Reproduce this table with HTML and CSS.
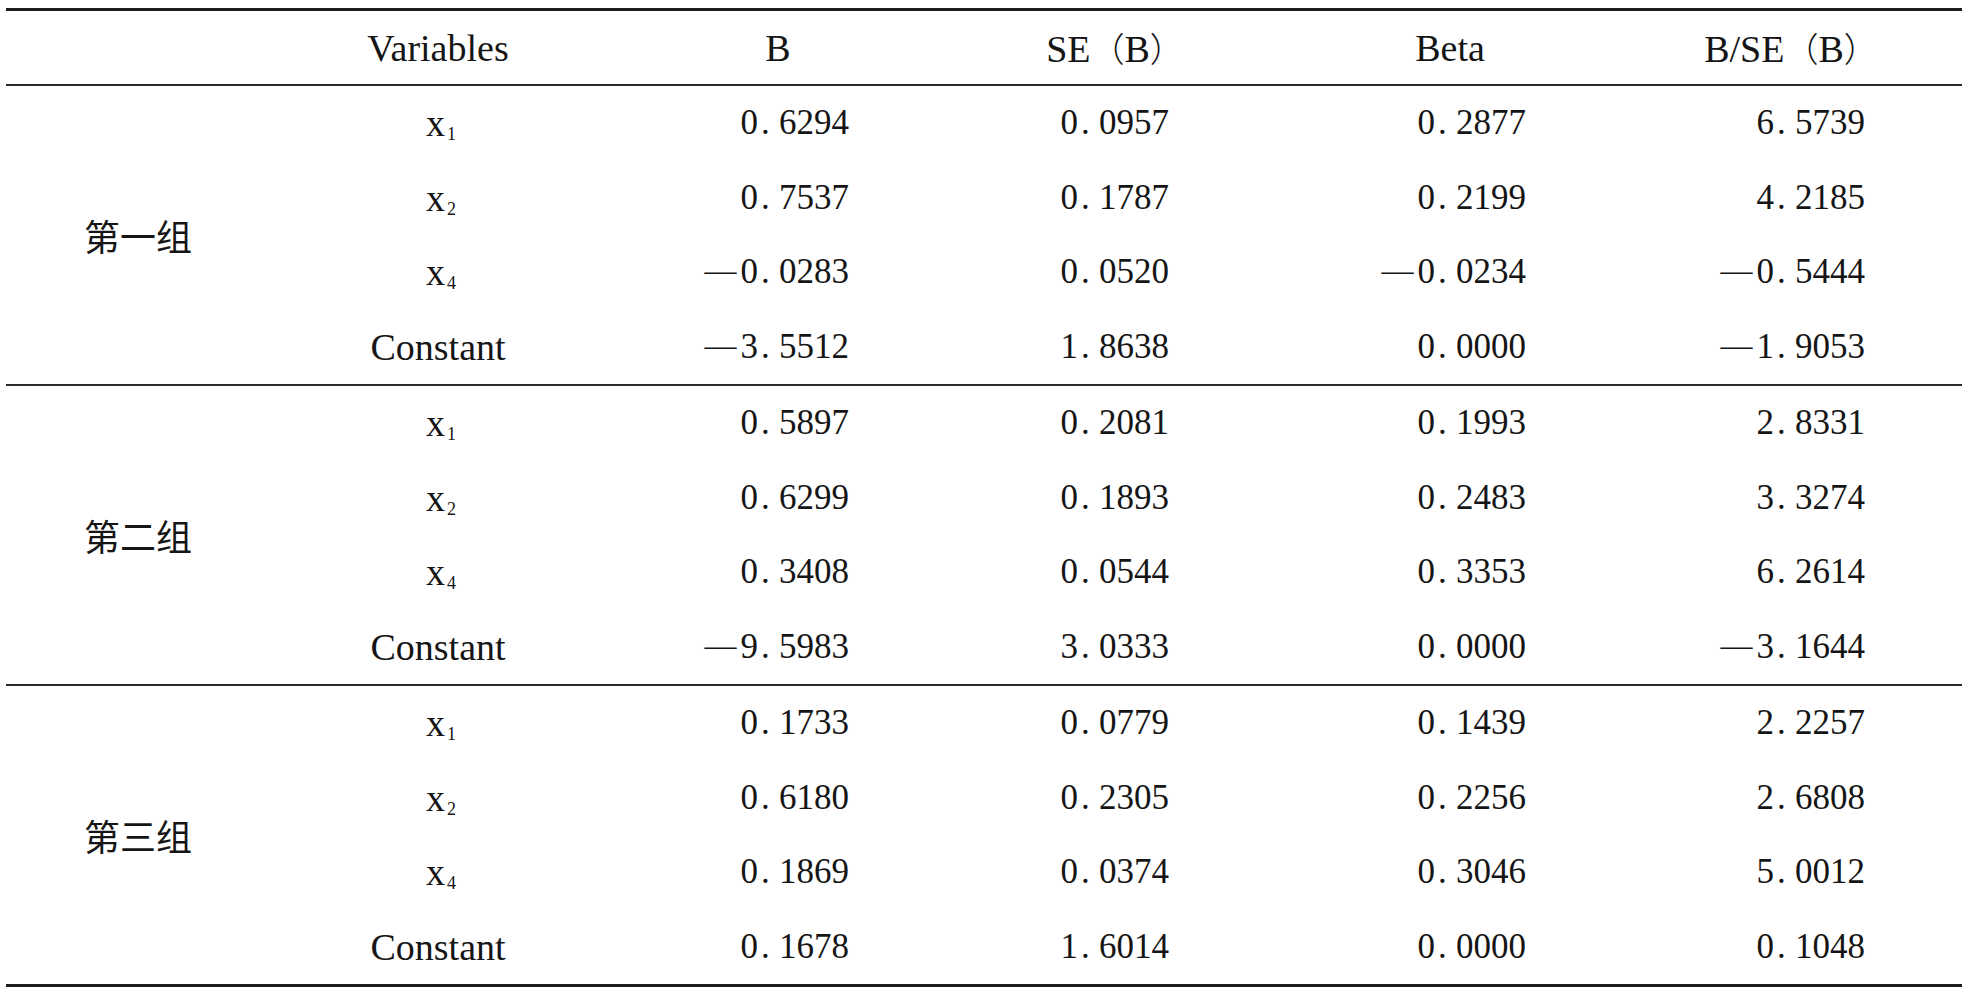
FILE: index.html
```html
<!DOCTYPE html>
<html lang="zh">
<head>
<meta charset="utf-8">
<title>Regression table</title>
<link rel="stylesheet" href="styles.css">
</head>
<body>
<div class="tbl">
  <div class="head">
    <div class="cell"></div>
    <div class="cell ctr">Variables</div>
    <div class="cell ctr">B</div>
    <div class="cell ctr"><span class="h">SE<span class="cjk">（</span>B<span class="cjk">）</span></span></div>
    <div class="cell ctr">Beta</div>
    <div class="cell ctr"><span class="h">B/SE<span class="cjk">（</span>B<span class="cjk">）</span></span></div>
  </div>

  <div class="group">
    <div class="cell label">第一组</div>
    <div class="cell ctr var"><span class="v">x<sub>1</sub></span></div>
    <div class="cell num cb"><span class="n">0<span class="pt">.</span>6294</span></div>
    <div class="cell num cse"><span class="n">0<span class="pt">.</span>0957</span></div>
    <div class="cell num cbeta"><span class="n">0<span class="pt">.</span>2877</span></div>
    <div class="cell num cr"><span class="n">6<span class="pt">.</span>5739</span></div>

    <div class="cell ctr var"><span class="v">x<sub>2</sub></span></div>
    <div class="cell num cb"><span class="n">0<span class="pt">.</span>7537</span></div>
    <div class="cell num cse"><span class="n">0<span class="pt">.</span>1787</span></div>
    <div class="cell num cbeta"><span class="n">0<span class="pt">.</span>2199</span></div>
    <div class="cell num cr"><span class="n">4<span class="pt">.</span>2185</span></div>

    <div class="cell ctr var"><span class="v">x<sub>4</sub></span></div>
    <div class="cell num cb"><span class="n"><span class="neg">—</span>0<span class="pt">.</span>0283</span></div>
    <div class="cell num cse"><span class="n">0<span class="pt">.</span>0520</span></div>
    <div class="cell num cbeta"><span class="n"><span class="neg">—</span>0<span class="pt">.</span>0234</span></div>
    <div class="cell num cr"><span class="n"><span class="neg">—</span>0<span class="pt">.</span>5444</span></div>

    <div class="cell ctr var">Constant</div>
    <div class="cell num cb"><span class="n"><span class="neg">—</span>3<span class="pt">.</span>5512</span></div>
    <div class="cell num cse"><span class="n">1<span class="pt">.</span>8638</span></div>
    <div class="cell num cbeta"><span class="n">0<span class="pt">.</span>0000</span></div>
    <div class="cell num cr"><span class="n"><span class="neg">—</span>1<span class="pt">.</span>9053</span></div>
  </div>

  <div class="group">
    <div class="cell label">第二组</div>
    <div class="cell ctr var"><span class="v">x<sub>1</sub></span></div>
    <div class="cell num cb"><span class="n">0<span class="pt">.</span>5897</span></div>
    <div class="cell num cse"><span class="n">0<span class="pt">.</span>2081</span></div>
    <div class="cell num cbeta"><span class="n">0<span class="pt">.</span>1993</span></div>
    <div class="cell num cr"><span class="n">2<span class="pt">.</span>8331</span></div>

    <div class="cell ctr var"><span class="v">x<sub>2</sub></span></div>
    <div class="cell num cb"><span class="n">0<span class="pt">.</span>6299</span></div>
    <div class="cell num cse"><span class="n">0<span class="pt">.</span>1893</span></div>
    <div class="cell num cbeta"><span class="n">0<span class="pt">.</span>2483</span></div>
    <div class="cell num cr"><span class="n">3<span class="pt">.</span>3274</span></div>

    <div class="cell ctr var"><span class="v">x<sub>4</sub></span></div>
    <div class="cell num cb"><span class="n">0<span class="pt">.</span>3408</span></div>
    <div class="cell num cse"><span class="n">0<span class="pt">.</span>0544</span></div>
    <div class="cell num cbeta"><span class="n">0<span class="pt">.</span>3353</span></div>
    <div class="cell num cr"><span class="n">6<span class="pt">.</span>2614</span></div>

    <div class="cell ctr var">Constant</div>
    <div class="cell num cb"><span class="n"><span class="neg">—</span>9<span class="pt">.</span>5983</span></div>
    <div class="cell num cse"><span class="n">3<span class="pt">.</span>0333</span></div>
    <div class="cell num cbeta"><span class="n">0<span class="pt">.</span>0000</span></div>
    <div class="cell num cr"><span class="n"><span class="neg">—</span>3<span class="pt">.</span>1644</span></div>
  </div>

  <div class="group last">
    <div class="cell label">第三组</div>
    <div class="cell ctr var"><span class="v">x<sub>1</sub></span></div>
    <div class="cell num cb"><span class="n">0<span class="pt">.</span>1733</span></div>
    <div class="cell num cse"><span class="n">0<span class="pt">.</span>0779</span></div>
    <div class="cell num cbeta"><span class="n">0<span class="pt">.</span>1439</span></div>
    <div class="cell num cr"><span class="n">2<span class="pt">.</span>2257</span></div>

    <div class="cell ctr var"><span class="v">x<sub>2</sub></span></div>
    <div class="cell num cb"><span class="n">0<span class="pt">.</span>6180</span></div>
    <div class="cell num cse"><span class="n">0<span class="pt">.</span>2305</span></div>
    <div class="cell num cbeta"><span class="n">0<span class="pt">.</span>2256</span></div>
    <div class="cell num cr"><span class="n">2<span class="pt">.</span>6808</span></div>

    <div class="cell ctr var"><span class="v">x<sub>4</sub></span></div>
    <div class="cell num cb"><span class="n">0<span class="pt">.</span>1869</span></div>
    <div class="cell num cse"><span class="n">0<span class="pt">.</span>0374</span></div>
    <div class="cell num cbeta"><span class="n">0<span class="pt">.</span>3046</span></div>
    <div class="cell num cr"><span class="n">5<span class="pt">.</span>0012</span></div>

    <div class="cell ctr var">Constant</div>
    <div class="cell num cb"><span class="n">0<span class="pt">.</span>1678</span></div>
    <div class="cell num cse"><span class="n">1<span class="pt">.</span>6014</span></div>
    <div class="cell num cbeta"><span class="n">0<span class="pt">.</span>0000</span></div>
    <div class="cell num cr"><span class="n">0<span class="pt">.</span>1048</span></div>
  </div>
</div>
</body>
</html>
```
FILE: styles.css
```css
html, body {
  margin: 0;
  padding: 0;
  background: #ffffff;
}

body {
  font-family: "Liberation Serif", "Noto Sans CJK SC", serif;
  color: #151515;
}

.tbl {
  width: 1956px;
  margin: 8px 0 0 6px;
  border-top: 3px solid #1c1c1c;
  border-bottom: 3px solid #1c1c1c;
}

.head,
.group {
  display: grid;
  grid-template-columns: 264px 336px 344px 330px 340px 342px;
}

.head {
  height: 73px;
  border-bottom: 2px solid #2a2a2a;
  font-size: 38px;
}

.group {
  grid-template-rows: repeat(4, 74.5px);
  border-bottom: 2px solid #2a2a2a;
}

.group.last {
  border-bottom: none;
}

.cell {
  display: flex;
  align-items: center;
  white-space: nowrap;
}

.ctr {
  justify-content: center;
}

.h {
  display: inline-block;
}

.cjk {
  font-family: "Noto Sans CJK SC", sans-serif;
  font-weight: 300;
  font-size: 34px;
}

.label {
  grid-column: 1;
  grid-row: 1 / span 4;
  justify-content: center;
  font-family: "Noto Sans CJK SC", sans-serif;
  font-size: 36px;
  font-weight: 400;
}

.var {
  font-size: 38px;
}

.v {
  display: inline-block;
  padding-left: 6px;
}

.v sub {
  font-size: 18px;
  vertical-align: -4px;
  line-height: 0;
  margin-left: 2px;
}

.num {
  justify-content: flex-end;
  font-size: 35px;
}

.n {
  display: inline-block;
}

.pt {
  display: inline-block;
  width: 18px;
  padding-left: 3px;
}

.neg {
  display: inline-block;
  width: 36px;
  font-size: 32px;
  vertical-align: 2px;
}

.cb { padding-right: 101px; }
.cse { padding-right: 111px; }
.cbeta { padding-right: 94px; }
.cr { padding-right: 97px; }
```
